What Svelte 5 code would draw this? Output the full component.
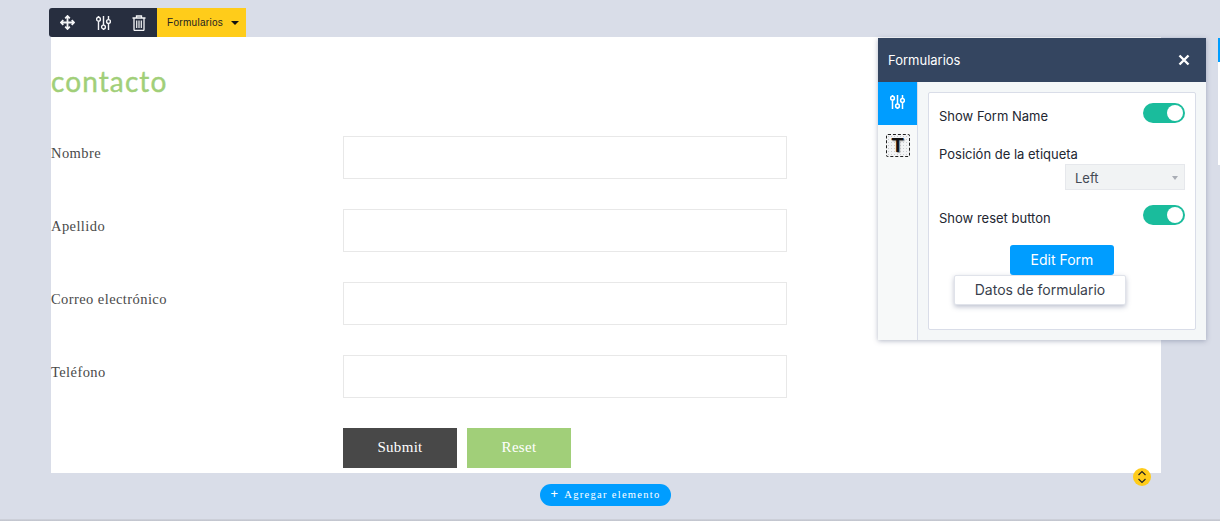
<script>
  const fields = ['Nombre', 'Apellido', 'Correo electrónico', 'Teléfono'];
</script>

<div class="page">
  <div class="canvas">
    <div class="toolbar">
      <div class="tools">
        <button class="tool" aria-label="Mover">
          <svg width="15" height="15" viewBox="0 0 15 15" fill="none" stroke="#f4f5f7" stroke-width="1.800"><path d="M7.500 1v13M1 7.500h13"/><path d="M5.200 3.300 7.500 1l2.300 2.300M5.200 11.700 7.500 14l2.300-2.300M3.300 5.200 1 7.500l2.300 2.300M11.700 5.200 14 7.500l-2.300 2.300"/></svg>
        </button>
        <button class="tool" aria-label="Ajustes">
          <svg width="15" height="16" viewBox="0 0 15 16" fill="none" stroke="#f4f5f7" stroke-width="1.400"><path d="M2.500 1v1.200M2.500 6.200V15M7.500 1v9M7.500 14v1M12.500 1v3.500M12.500 8.500V15"/><circle cx="2.500" cy="4.200" r="1.900"/><circle cx="7.500" cy="12" r="1.900"/><circle cx="12.500" cy="6.500" r="1.900"/></svg>
        </button>
        <button class="tool" aria-label="Eliminar">
          <svg width="14" height="16" viewBox="0 0 14 16" fill="none" stroke="#f4f5f7" stroke-width="1.300"><path d="M.5 3h13M4.500 3V1h5v2M2 3v11.500a1 1 0 0 0 1 1h8a1 1 0 0 0 1-1V3"/><path d="M4.700 5.500v7.500M7 5.500v7.500M9.300 5.500v7.500" stroke-width="1.200"/></svg>
        </button>
      </div>
      <div class="tool-label"><span>Formularios</span><i class="caret"></i></div>
    </div>

    <div class="sheet">
      <h1>contacto</h1>
      <div class="rows">
        {#each fields as f}
          <div class="row">
            <span class="lbl">{f}</span>
            <div class="input"></div>
          </div>
        {/each}
      </div>
      <div class="actions">
        <span class="btn submit">Submit</span>
        <span class="btn reset">Reset</span>
      </div>
    </div>

    <div class="add-row">
      <span class="add"><b>+</b>Agregar elemento</span>
    </div>
  </div>

  <span class="handle" aria-hidden="true">
    <svg width="12" height="14" viewBox="0 0 12 14" fill="none" stroke="#222" stroke-width="1.200"><path d="M2.500 5 6 1.500 9.500 5M2.500 9 6 12.500 9.500 9"/></svg>
  </span>

  <aside class="panel">
    <header><span>Formularios</span>
      <svg width="12" height="12" viewBox="0 0 12 12" stroke="#fff" stroke-width="2.400"><path d="M1.500 1.500l9 9M10.500 1.500l-9 9"/></svg>
    </header>
    <div class="panel-body">
      <nav>
        <div class="tab active">
          <svg class="tab-icon" width="15" height="16" viewBox="0 0 15 16" fill="none" stroke="#fff" stroke-width="1.500"><path d="M2.500 1v1.200M2.500 6.200V15M7.500 1v9M7.500 14v1M12.500 1v3.500M12.500 8.500V15"/><circle cx="2.500" cy="4.200" r="1.900"/><circle cx="7.500" cy="12" r="1.900"/><circle cx="12.500" cy="6.500" r="1.900"/></svg>
        </div>
        <div class="tab"><span class="t-icon">T</span></div>
      </nav>
      <div class="content">
        <div class="card">
          <div class="line first"><span>Show Form Name</span><i class="toggle"></i></div>
          <div class="pos">Posición de la etiqueta</div>
          <div class="select-row"><div class="select"><span>Left</span><i class="mini-caret"></i></div></div>
          <div class="line third"><span>Show reset button</span><i class="toggle"></i></div>
          <div class="edit-wrap"><span class="edit">Edit Form</span></div>
          <div class="data-wrap"><span class="data">Datos de formulario</span></div>
        </div>
      </div>
    </div>
  </aside>

  <div class="edge"><i></i></div>
  <div class="bottom-line"></div>
</div>

<style>
  :global(body) { margin: 0; }
  .page {
    position: relative;
    width: 1220px;
    height: 521px;
    overflow: hidden;
    background: #d9dde8;
    font-family: Inter, "Liberation Sans", sans-serif;
  }
  .canvas { padding: 8px 0 0 51px; width: 1110px; }
  .toolbar { display: flex; height: 29px; margin-left: -2px; width: 197px; }
  .tools {
    display: flex;
    align-items: center;
    width: 108px;
    background: #272e3f;
    border-radius: 3px 0 0 3px;
  }
  .tool { all: unset; display: flex; justify-content: center; width: 36px; }
  .tool-label {
    flex: 1;
    display: flex;
    align-items: center;
    background: #ffcc1a;
    color: #222;
    font: 10px "Liberation Sans", sans-serif;
    letter-spacing: 0.300px;
    padding-left: 10px;
    gap: 8px;
  }
  .caret { border: 4px solid transparent; border-top: 4px solid #111; border-bottom: 0; width: 0; height: 0; }
  .sheet { background: #fff; height: 436px; box-sizing: border-box; position: relative; display: flow-root; }
  h1 {
    margin: 26px 0 0;
    height: 36px;
    font: 400 28px/36px "Lato", "Noto Sans", sans-serif;
    letter-spacing: 1.100px;
    -webkit-text-stroke: 0.400px #a1cf79;
    color: #a1cf79;
  }
  .rows { margin-top: 37px; display: flex; flex-direction: column; gap: 30px; }
  .row { display: flex; height: 43px; }
  .lbl {
    width: 292px;
    font: 14.500px/34px "Liberation Serif", serif;
    color: #4a4a4a;
    letter-spacing: 0.420px;
  }
  .input { width: 444px; height: 43px; box-sizing: border-box; border: 1px solid #e8e8e8; background: #fff; }
  .actions { display: flex; gap: 10px; margin: 30px 0 0 292px; }
  .btn {
    height: 40px;
    padding-bottom: 2px;
    box-sizing: border-box;
    display: flex;
    align-items: center;
    justify-content: center;
    color: #fff;
    font: 15px "Liberation Serif", serif;
    letter-spacing: 0.300px;
  }
  .submit { width: 114px; background: #484848; }
  .reset { width: 104px; background: #a1cf79; }
  .add-row { display: flex; justify-content: center; margin-top: 11px; }
  .add {
    width: 131px;
    height: 22px;
    margin-left: -1px;
    box-sizing: border-box;
    border-radius: 11px;
    background: #009dff;
    color: #fff;
    font: 10.500px/22px "Liberation Serif", serif;
    letter-spacing: 1.300px;
    display: flex;
    justify-content: center;
    align-items: center;
    gap: 5px;
  }
  .add b { font: 400 13px/18px "Liberation Sans", sans-serif; margin-top: -2px; }
  .handle {
    position: absolute;
    left: 1133px;
    top: 468px;
    width: 18px;
    height: 18px;
    border-radius: 50%;
    background: #ffcc1a;
    display: flex;
    align-items: center;
    justify-content: center;
  }
  .panel {
    position: absolute;
    left: 878px;
    top: 38px;
    width: 328px;
    height: 302px;
    background: #f4f7f8;
    box-shadow: 0 1px 5px rgba(90, 100, 130, 0.45);
    display: flex;
    flex-direction: column;
  }
  header {
    height: 44px;
    flex: none;
    background: #344560;
    color: #fff;
    font-size: 13px;
    display: flex;
    align-items: center;
    justify-content: space-between;
    padding: 0 16px 0 10px;
  }
  .panel-body { flex: 1; display: flex; min-height: 0; }
  nav { width: 40px; box-sizing: border-box; flex: none; border-right: 1px solid #d9dde8; background: #f7f9f9; }
  .tab { height: 43px; display: flex; align-items: center; justify-content: center; }
  .tab.active { background: #009dff; }
  .tab-icon { margin-top: -4px; }
  .t-icon {
    width: 24px;
    height: 23px;
    box-sizing: border-box;
    margin-top: -2px;
    border: 1px dashed #222;
    border-radius: 2px;
    background: radial-gradient(#c9ccd0 0.600px, #f3f4f5 0.700px) 0 0 / 3px 3px;
    font: 700 20px/21px "Liberation Sans", sans-serif;
    color: #111;
    text-align: center;
    text-shadow: 1px 1px 1px #999;
  }
  .content { flex: 1; padding: 10px 10px 10px; min-width: 0; }
  .card {
    height: 100%;
    box-sizing: border-box;
    background: #fff;
    border: 1px solid #d9dde8;
    border-radius: 2px;
    padding: 0 10px;
    font-size: 13px;
    color: #222631;
  }
  .line { display: flex; justify-content: space-between; align-items: flex-start; }
  .line.first { padding-top: 10px; height: 44px; box-sizing: border-box; }
  .line.first span { margin-top: 5px; }
  .line.third { margin-top: 15px; height: 20px; }
  .line.third span { margin-top: 5px; }
  .toggle {
    position: relative;
    display: block;
    width: 42px;
    height: 20px;
    border-radius: 10px;
    background: #1abc9c;
  }
  .toggle::after {
    content: '';
    position: absolute;
    right: 2px;
    top: 2px;
    width: 16px;
    height: 16px;
    border-radius: 50%;
    background: #fff;
  }
  .pos { margin-top: 8px; line-height: 18px; height: 18px; }
  .select-row { display: flex; justify-content: flex-end; margin-top: 1px; }
  .select {
    width: 120px;
    height: 26px;
    box-sizing: border-box;
    background: #f1f3f4;
    border: 1px solid #e6e8ec;
    padding: 2px 6px 0 9px;
    display: flex;
    align-items: center;
    justify-content: space-between;
    color: #444a55;
  }
  .mini-caret { border: 3px solid transparent; border-top: 4px solid #a9adb5; border-bottom: 0; }
  .edit-wrap { display: flex; justify-content: center; margin-top: 20px; }
  .edit {
    width: 104px;
    height: 30px;
    padding-bottom: 2px;
    box-sizing: border-box;
    background: #009dff;
    color: #fff;
    border-radius: 3px;
    display: flex;
    align-items: center;
    justify-content: center;
    font-size: 14px;
  }
  .data-wrap { margin-left: 15px; }
  .data {
    display: flex;
    width: 172px;
    height: 30px;
    padding-bottom: 2px;
    box-sizing: border-box;
    background: #fff;
    border: 1px solid #e0e3ea;
    border-radius: 2px;
    box-shadow: 0 2px 5px rgba(70, 80, 120, 0.35);
    align-items: center;
    justify-content: center;
    font-size: 14px;
    color: #3a3f4d;
  }
  .edge {
    position: absolute;
    left: 1218px;
    top: 38px;
    width: 2px;
    height: 127px;
    background: #fff;
  }
  .edge i { display: block; height: 24px; background: #009dff; }
  .bottom-line {
    position: absolute;
    left: 0;
    right: 0;
    bottom: 0;
    height: 2px;
    background: linear-gradient(#d0d3dc, #bfc2cb);
  }
</style>
